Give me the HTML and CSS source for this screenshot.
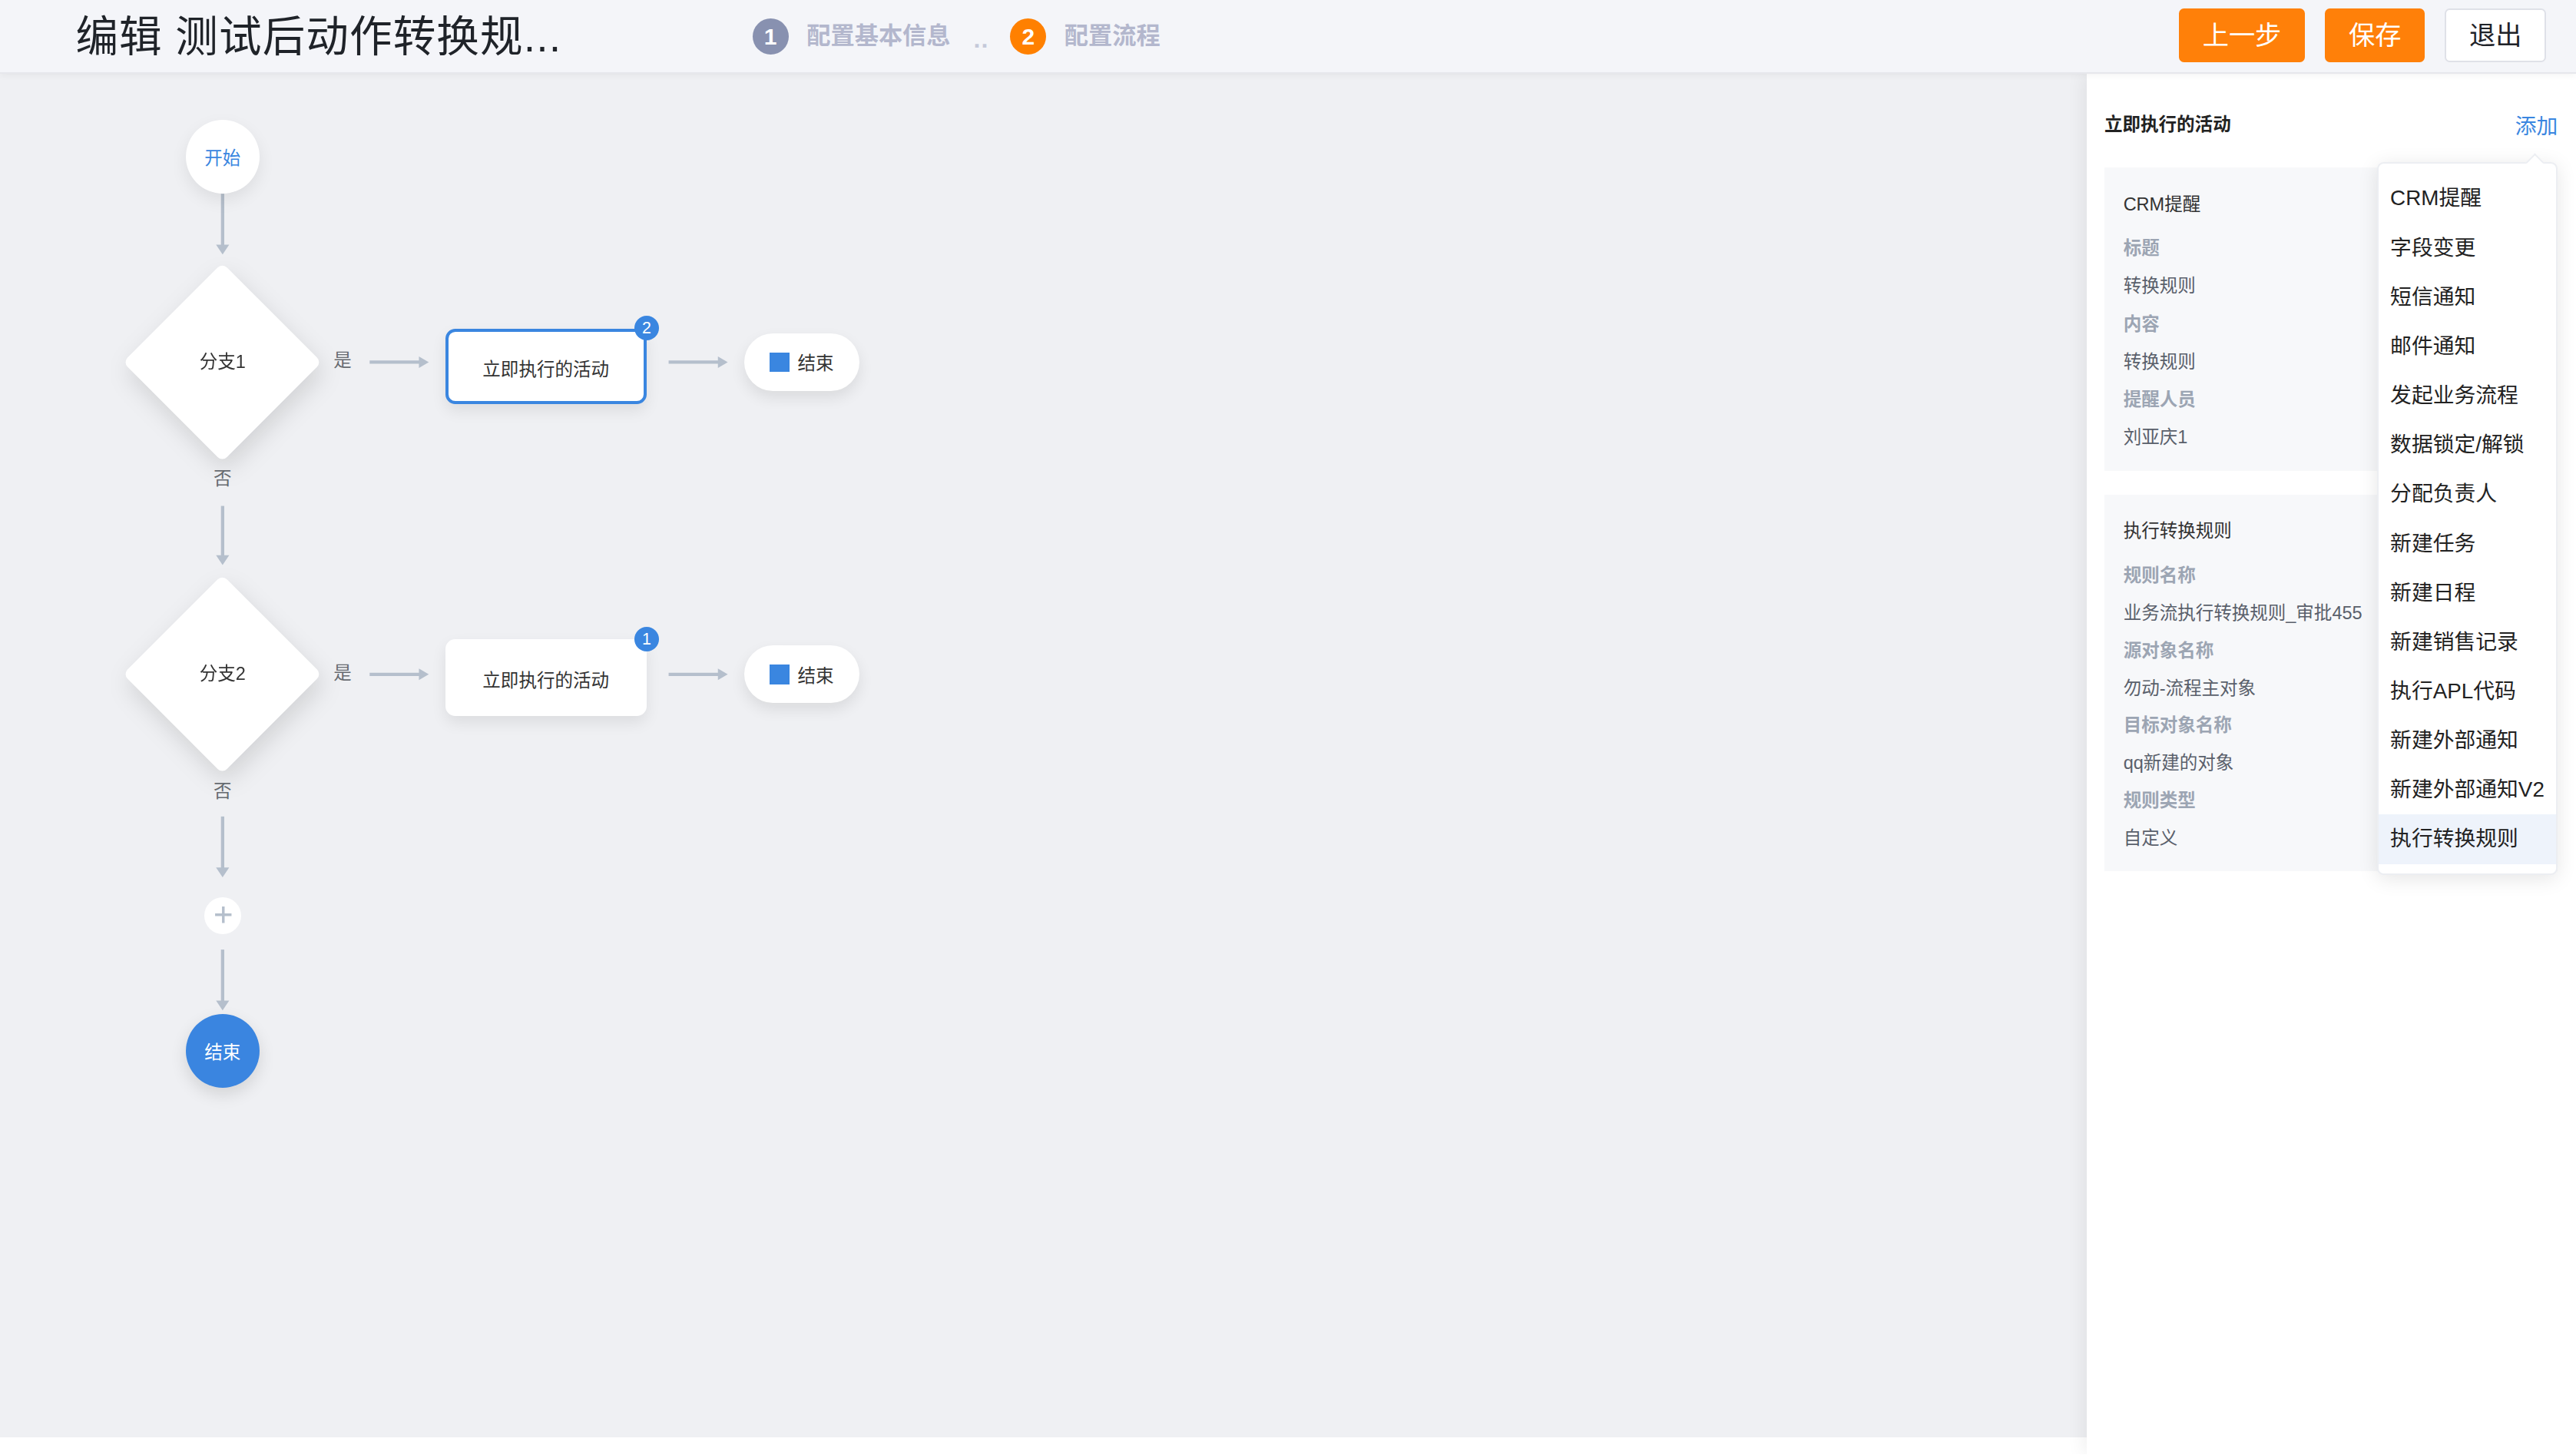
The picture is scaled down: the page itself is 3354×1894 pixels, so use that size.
FILE: index.html
```html
<!DOCTYPE html>
<html lang="zh-CN">
<head>
<meta charset="utf-8">
<title>编辑 测试后动作转换规则</title>
<link rel="stylesheet" href="styles.css">
</head>
<body>
<div class="app">
  <header class="topbar">
    <div class="title">编辑 测试后动作转换规...</div>
    <div class="steps">
      <span class="step-num done">1</span>
      <span class="step-text">配置基本信息</span>
      <span class="step-dots">..</span>
      <span class="step-num active">2</span>
      <span class="step-text">配置流程</span>
    </div>
    <div class="actions">
      <button class="btn btn-primary">上一步</button>
      <button class="btn btn-primary">保存</button>
      <button class="btn btn-default">退出</button>
    </div>
  </header>

  <div class="main">
    <div class="canvas-col">
      <div class="canvas">
        <svg class="links" width="1270" height="830" viewBox="0 0 1270 830">
          <g stroke="#b5bfcc" stroke-width="2" fill="none">
            <line x1="135.5" y1="73" x2="135.5" y2="105"/>
            <line x1="135.5" y1="263" x2="135.5" y2="294"/>
            <line x1="135.5" y1="452" x2="135.5" y2="484"/>
            <line x1="135.5" y1="533" x2="135.5" y2="565"/>
            <line x1="225" y1="175.5" x2="256" y2="175.5"/>
            <line x1="407" y1="175.5" x2="438" y2="175.5"/>
            <line x1="225" y1="365.5" x2="256" y2="365.5"/>
            <line x1="407" y1="365.5" x2="438" y2="365.5"/>
          </g>
          <g fill="#b5bfcc">
            <polygon points="131.5,104 139.5,104 135.5,110"/>
            <polygon points="131.5,293 139.5,293 135.5,299"/>
            <polygon points="131.5,483 139.5,483 135.5,489"/>
            <polygon points="131.5,564 139.5,564 135.5,570"/>
            <polygon points="255,172 255,179 261,175.5"/>
            <polygon points="437,172 437,179 443,175.5"/>
            <polygon points="255,362 255,369 261,365.5"/>
            <polygon points="437,362 437,369 443,365.5"/>
          </g>
        </svg>

        <div class="node node-start">开始</div>

        <div class="node diamond d1"><div class="diamond-shape"></div><span class="diamond-text">分支1</span></div>
        <span class="edge-label yes y1">是</span>
        <span class="edge-label no n1">否</span>
        <div class="node activity a1 selected">立即执行的活动<span class="badge">2</span></div>
        <div class="node end-pill p1"><span class="end-square"></span>结束</div>

        <div class="node diamond d2"><div class="diamond-shape"></div><span class="diamond-text">分支2</span></div>
        <span class="edge-label yes y2">是</span>
        <span class="edge-label no n2">否</span>
        <div class="node activity a2">立即执行的活动<span class="badge">1</span></div>
        <div class="node end-pill p2"><span class="end-square"></span>结束</div>

        <div class="node node-add">
          <svg width="11" height="11" viewBox="0 0 11 11"><path d="M5.5 0.5v10M0.5 5.5h10" stroke="#b5bfcc" stroke-width="1.6"/></svg>
        </div>
        <div class="node node-end">结束</div>
      </div>
    </div>

    <aside class="panel">
      <div class="panel-head">
        <span class="panel-title">立即执行的活动</span>
        <span class="panel-add">添加</span>
      </div>

      <div class="card">
        <div class="card-title">CRM提醒</div>
        <div class="row label">标题</div>
        <div class="row value">转换规则</div>
        <div class="row label">内容</div>
        <div class="row value">转换规则</div>
        <div class="row label">提醒人员</div>
        <div class="row value">刘亚庆1</div>
      </div>

      <div class="card card-rule">
        <div class="card-title">执行转换规则</div>
        <div class="row label">规则名称</div>
        <div class="row value">业务流执行转换规则_审批455</div>
        <div class="row label">源对象名称</div>
        <div class="row value">勿动-流程主对象</div>
        <div class="row label">目标对象名称</div>
        <div class="row value">qq新建的对象</div>
        <div class="row label">规则类型</div>
        <div class="row value">自定义</div>
      </div>

      <div class="dropdown">
        <span class="dropdown-arrow"></span>
        <ul class="menu">
          <li>CRM提醒</li>
          <li>字段变更</li>
          <li>短信通知</li>
          <li>邮件通知</li>
          <li>发起业务流程</li>
          <li>数据锁定/解锁</li>
          <li>分配负责人</li>
          <li>新建任务</li>
          <li>新建日程</li>
          <li>新建销售记录</li>
          <li>执行APL代码</li>
          <li>新建外部通知</li>
          <li>新建外部通知V2</li>
          <li class="hover">执行转换规则</li>
        </ul>
      </div>
    </aside>
  </div>
</div>
</body>
</html>
```

FILE: styles.css
```css
html, body {
  margin: 0;
  padding: 0;
  background: #ffffff;
}

body {
  font-family: "Liberation Sans", "Noto Sans CJK SC", sans-serif;
  color: #333333;
  overflow: hidden;
}

.app {
  zoom: 2.139;
  width: 1568px;
  height: 885px;
  overflow: hidden;
  background: #ffffff;
}

/* ---------- top bar ---------- */
.topbar {
  position: relative;
  z-index: 3;
  height: 44px;
  display: flex;
  align-items: center;
  padding: 0 18px 0 46px;
  background: #f4f5f9;
  border-bottom: 1px solid #e6e7ec;
  box-shadow: 0 1px 4px rgba(0, 0, 0, 0.05);
}

.title {
  flex: 0 0 412px;
  font-size: 26px;
  line-height: 30px;
  letter-spacing: 0.5px;
  color: #1f2329;
  white-space: nowrap;
  padding-top: 1px;
}

.steps {
  display: flex;
  align-items: center;
}

.step-num {
  width: 22px;
  height: 22px;
  border-radius: 50%;
  color: #ffffff;
  font-size: 14px;
  font-weight: bold;
  line-height: 22px;
  text-align: center;
  margin-right: 11px;
}

.step-num.done { background: #8891b0; }
.step-num.active { background: #ff8000; }

.step-text {
  font-size: 14.6px;
  font-weight: bold;
  color: #b3b7cd;
  line-height: 20px;
}

.step-dots {
  margin: 0 13px 0 14px;
  color: #c5c9d9;
  font-size: 15px;
  font-weight: bold;
  line-height: 20px;
  letter-spacing: 0.5px;
  padding-top: 4px;
}

.actions {
  margin-left: auto;
  display: flex;
  gap: 12px;
  padding-bottom: 1px;
}

.btn {
  height: 33px;
  padding: 0 14.5px;
  font-family: "Liberation Sans", "Noto Sans CJK SC", sans-serif;
  font-size: 16px;
  line-height: 33px;
  border-radius: 3px;
  border: none;
  cursor: pointer;
}

.btn-primary {
  background: #ff8009;
  color: #ffffff;
}

.btn-default {
  background: #ffffff;
  color: #1f2329;
  border: 1px solid #dfe1e8;
  line-height: 31px;
  padding: 0 14px;
}

/* ---------- main ---------- */
.main {
  display: flex;
  height: 840px;
}

.canvas-col {
  flex: 0 0 1270px;
}

.canvas {
  position: relative;
  height: 830px;
  background: #eff0f3;
  overflow: hidden;
}

.links {
  position: absolute;
  left: 0;
  top: 0;
}

.node {
  position: absolute;
  box-sizing: border-box;
  font-size: 11px;
  color: #333333;
  display: flex;
  align-items: center;
  justify-content: center;
}

.node-start {
  left: 113px;
  top: 28px;
  width: 45px;
  height: 45px;
  border-radius: 50%;
  background: #ffffff;
  color: #3a86e0;
  box-shadow: 0 4px 10px rgba(0, 0, 0, 0.08);
}

.node-end {
  left: 113px;
  top: 572px;
  width: 45px;
  height: 45px;
  border-radius: 50%;
  background: #3a85e0;
  color: #ffffff;
  box-shadow: 0 4px 10px rgba(0, 0, 0, 0.12);
}

.node-add {
  left: 124.5px;
  top: 501px;
  width: 22.5px;
  height: 22.5px;
  border-radius: 50%;
  background: #ffffff;
}

.node-add svg {
  margin-top: -1px;
}

.diamond {
  left: 75px;
  width: 121px;
  height: 121px;
  filter: drop-shadow(2px 6px 7px rgba(0, 0, 0, 0.12));
}

.d1 { top: 115px; }
.d2 { top: 305px; }

.diamond-shape {
  position: absolute;
  left: 17.75px;
  top: 17.75px;
  width: 85.5px;
  height: 85.5px;
  background: #ffffff;
  border-radius: 4px;
  transform: rotate(45deg);
}

.diamond-text {
  position: relative;
  line-height: 14px;
}

.edge-label {
  position: absolute;
  font-size: 11px;
  line-height: 14px;
  color: #666a70;
  width: 20px;
  text-align: center;
}

.yes { left: 198.5px; }
.y1 { top: 168px; }
.y2 { top: 358px; }

.no { left: 125.5px; }
.n1 { top: 240px; }
.n2 { top: 430px; }

.activity {
  left: 271px;
  width: 122.5px;
  height: 46px;
  background: #ffffff;
  border: 2px solid #ffffff;
  border-radius: 6px;
  padding-top: 2px;
  box-shadow: 0 4px 9px rgba(0, 0, 0, 0.08);
}

.activity.selected {
  border-color: #3a86e0;
}

.a1 { top: 155px; }
.a2 { top: 344px; height: 47px; }

.badge {
  position: absolute;
  right: -9.5px;
  top: -9.5px;
  width: 15px;
  height: 15px;
  border-radius: 50%;
  background: #3a86e0;
  color: #ffffff;
  font-size: 10px;
  line-height: 15px;
  text-align: center;
}

.end-pill {
  left: 453px;
  width: 70px;
  height: 35px;
  border-radius: 18px;
  background: #ffffff;
  box-shadow: 0 4px 9px rgba(0, 0, 0, 0.09);
}

.p1 { top: 158px; }
.p2 { top: 348px; }

.end-square {
  width: 12px;
  height: 12px;
  background: #3a86e0;
  margin-right: 5px;
}

/* ---------- right panel ---------- */
.panel {
  position: relative;
  z-index: 2;
  flex: 0 0 298px;
  box-sizing: border-box;
  padding: 22px 11px 0 11px;
  background: #ffffff;
  box-shadow: -3px 0 10px rgba(0, 0, 0, 0.06);
}

.panel-head {
  display: flex;
  justify-content: space-between;
  align-items: center;
  height: 16px;
  margin-bottom: 19px;
}

.panel-title {
  font-size: 11px;
  font-weight: bold;
  color: #222222;
}

.panel-add {
  font-size: 13px;
  color: #3a86e0;
  padding-top: 2px;
}

.card {
  background: #f7f8fa;
  padding: 11px 11.5px 8.5px;
  margin-bottom: 14.5px;
}

.card-title {
  font-size: 11px;
  line-height: 23px;
  color: #333333;
  margin-bottom: 4px;
}

.row {
  font-size: 11px;
  line-height: 23px;
  white-space: nowrap;
}

.card-rule .row {
  line-height: 22.85px;
}

.row.label {
  color: #9ca5b3;
  font-weight: bold;
}

.row.value {
  color: #5a606b;
}

.dropdown {
  position: absolute;
  left: 177px;
  top: 53.5px;
  width: 110px;
  box-sizing: border-box;
  background: #ffffff;
  border: 1px solid #eceef2;
  border-radius: 4px;
  box-shadow: 0 2px 12px rgba(0, 0, 0, 0.1);
  padding: 6.5px 0 6px;
}

.dropdown-arrow {
  position: absolute;
  left: 91px;
  top: -4.5px;
  width: 7px;
  height: 7px;
  background: #ffffff;
  border-top: 1px solid #eceef2;
  border-left: 1px solid #eceef2;
  transform: rotate(45deg);
}

.menu {
  list-style: none;
  margin: 0;
  padding: 0;
}

.menu li {
  height: 30px;
  line-height: 30px;
  padding-left: 7px;
  font-size: 13px;
  color: #222222;
  white-space: nowrap;
}

.menu li.hover {
  background: #eef3fb;
}
```
